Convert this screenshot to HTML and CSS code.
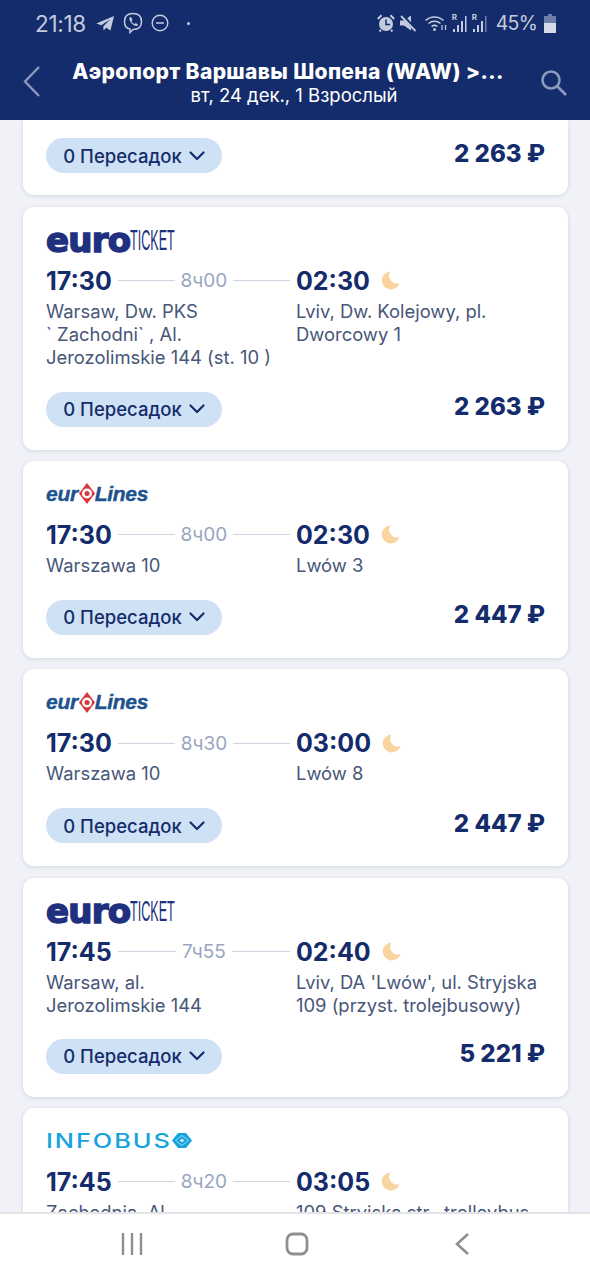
FILE: index.html
```html
<!DOCTYPE html>
<html lang="ru">
<head>
<meta charset="utf-8">
<title>Билеты</title>
<link rel="stylesheet" href="styles.css">
</head>
<body>
<svg class="defs" width="0" height="0" aria-hidden="true">
  <defs>
    <symbol id="moon" viewBox="0 0 20 20"><path d="M10 .5A9.500 9.500 0 1 0 19.500 12.500 8 8 0 0 1 10 .5Z" fill="#f9d3a0"/></symbol>
    <symbol id="chev" viewBox="0 0 16 10"><path d="M1.500 1.500 8 8l6.500-6.500" fill="none" stroke="#142c6b" stroke-width="2.200" stroke-linecap="round" stroke-linejoin="round"/></symbol>
    <symbol id="mark" viewBox="0 0 20 15"><path d="M0 7.500 6 0h8l6 7.500-6 7.500H6Z" fill="#14a3dc"/><path d="M3.500 7.500 10 2.500l6.500 5-6.500 5Z" fill="none" stroke="#bfe6f6" stroke-width=".8"/><path d="M7.500 7.500 10 5.500l2.500 2L10 9.500Z" fill="#bfe6f6"/></symbol>
    <symbol id="lmark" viewBox="0 0 16 21"><path d="M8 0 16 10.500 8 21 0 10.500Z" fill="#d8363a"/><circle cx="8" cy="10.500" r="5" fill="#fff"/><circle cx="8" cy="10.500" r="2.500" fill="#d8363a"/></symbol>
  </defs>
</svg>
<div class="app">
  <header class="top">
    <div class="status">
      <div class="status-group">
        <span class="clock">21:18</span>
        <svg class="ic" width="20" height="17" viewBox="0 0 18 16"><path d="M17.500 1 .8 8l4.700 1.600L14 4 7.500 10.500v4.200l2.800-2.800 3.800 2.600Z" fill="#c4cbde"/></svg>
        <svg class="ic" width="20" height="22" viewBox="0 0 20 22"><path d="M10 1.500c5 0 8.500 2 8.500 8s-3.500 8-8.500 8l-3 3v-3.500C3 16.500 1.500 14 1.500 9.500c0-6 3.500-8 8.500-8Z" fill="none" stroke="#c4cbde" stroke-width="1.500"/><path d="M6.500 5.500 8 5l1.500 2.500L8.500 9c.5 1.500 1.500 2.500 3 3l1.500-1 2 1.800-.8 1.200c-3.700.5-8.500-4.500-7.700-8.500Z" fill="#c4cbde"/></svg>
        <svg class="ic" width="18" height="18" viewBox="0 0 18 18"><circle cx="9" cy="9" r="7.800" fill="none" stroke="#c4cbde" stroke-width="1.400"/><path d="M5 9h8" stroke="#c4cbde" stroke-width="1.500"/></svg>
        <span class="dot"></span>
      </div>
      <div class="status-group right">
        <svg class="ic" width="18" height="18" viewBox="0 0 18 18"><circle cx="9" cy="10" r="7" fill="#c4cbde"/><path d="M9 5.500v5h4" fill="none" stroke="#142c6b" stroke-width="1.500"/><path d="M.8 5 4.500 1.300M17.200 5 13.500 1.300M4 16l-1.500 1.500M14 16l1.500 1.500" stroke="#c4cbde" stroke-width="2"/></svg>
        <svg class="ic" width="18" height="18" viewBox="0 0 18 18"><path d="M1 6.500h4l7-5v15l-7-5H1Z" fill="#c4cbde"/><path d="M3 1l14 15.500" stroke="#142c6b" stroke-width="3.500"/><path d="M2 2l14.500 15" stroke="#c4cbde" stroke-width="1.800"/></svg>
        <svg class="ic wifi" width="24" height="18" viewBox="0 0 24 18"><path d="M1.500 6.500a13 13 0 0 1 18 0M4.500 9.500a9 9 0 0 1 12 0M7.500 12.500a5 5 0 0 1 6 0" fill="none" stroke="#c4cbde" stroke-width="1.500"/><circle cx="10.500" cy="15.500" r="1.500" fill="#c4cbde"/><path d="M18 11v5M21.500 16v-5" stroke="#c4cbde" stroke-width="1.200"/></svg>
        <span class="sig"><svg width="16" height="18" viewBox="0 0 16 18"><path d="M1 15h2v3H1ZM5 11h2v7H5ZM9 7h2v11H9ZM13 2h1.500v16H13Z" fill="#c4cbde"/></svg><i class="r">R</i></span>
        <span class="sig"><svg width="16" height="18" viewBox="0 0 16 18"><path d="M1 15h2v3H1ZM5 11h2v7H5ZM9 7h2v11H9Z" fill="#c4cbde"/><path d="M13 2h1.500v16H13Z" fill="#6f7ea6"/></svg><i class="r">R</i></span>
        <span class="pct">45%</span>
        <svg class="ic" width="12" height="19" viewBox="0 0 12 19"><path d="M4 0h4v2h4v17H0V2h4Z" fill="#6f7ea6"/><path d="M0 9h12v10H0Z" fill="#d5daea"/></svg>
      </div>
    </div>
    <div class="bar">
      <svg class="back" width="20" height="32" viewBox="0 0 20 32"><path d="M17 2 3 16.500 17 31" fill="none" stroke="#8b99bd" stroke-width="2.400"/></svg>
      <div class="title">
        <div class="route">Аэропорт Варшавы Шопена (WAW) &gt;...</div>
        <div class="sub">вт, 24 дек., 1 Взрослый</div>
      </div>
      <svg class="search" width="28" height="28" viewBox="0 0 28 28"><circle cx="11" cy="11" r="8.500" fill="none" stroke="#8b99bd" stroke-width="2.600"/><path d="m17 17 9 9" stroke="#8b99bd" stroke-width="2.800"/></svg>
    </div>
  </header>

  <main class="list">
    <article class="card card-cut">
      <div class="foot">
        <button class="pill">0 Пересадок <svg class="chev"><use href="#chev"/></svg></button>
        <div class="price">2 263 ₽</div>
      </div>
    </article>

    <article class="card">
      <div class="logo euro"><span class="euro-a">euro</span><span class="euro-b">TICKET</span></div>
      <div class="times">
        <div class="col dep"><b class="time">17:30</b><span class="line"></span><span class="dur">8ч00</span><span class="line"></span></div>
        <div class="col"><b class="time">02:30</b><svg class="moon"><use href="#moon"/></svg></div>
      </div>
      <div class="places">
        <div class="place">Warsaw, Dw. PKS<br>` Zachodni` , Al.<br>Jerozolimskie 144 (st. 10 )</div>
        <div class="place">Lviv, Dw. Kolejowy, pl.<br>Dworcowy 1</div>
      </div>
      <div class="foot">
        <button class="pill">0 Пересадок <svg class="chev"><use href="#chev"/></svg></button>
        <div class="price">2 263 ₽</div>
      </div>
    </article>

    <article class="card">
      <div class="logo lines"><span>eur</span><svg class="lines-mark"><use href="#lmark"/></svg><span>Lines</span></div>
      <div class="times">
        <div class="col dep"><b class="time">17:30</b><span class="line"></span><span class="dur">8ч00</span><span class="line"></span></div>
        <div class="col"><b class="time">02:30</b><svg class="moon"><use href="#moon"/></svg></div>
      </div>
      <div class="places">
        <div class="place">Warszawa 10</div>
        <div class="place">Lwów 3</div>
      </div>
      <div class="foot">
        <button class="pill">0 Пересадок <svg class="chev"><use href="#chev"/></svg></button>
        <div class="price">2 447 ₽</div>
      </div>
    </article>

    <article class="card">
      <div class="logo lines"><span>eur</span><svg class="lines-mark"><use href="#lmark"/></svg><span>Lines</span></div>
      <div class="times">
        <div class="col dep"><b class="time">17:30</b><span class="line"></span><span class="dur">8ч30</span><span class="line"></span></div>
        <div class="col"><b class="time">03:00</b><svg class="moon"><use href="#moon"/></svg></div>
      </div>
      <div class="places">
        <div class="place">Warszawa 10</div>
        <div class="place">Lwów 8</div>
      </div>
      <div class="foot">
        <button class="pill">0 Пересадок <svg class="chev"><use href="#chev"/></svg></button>
        <div class="price">2 447 ₽</div>
      </div>
    </article>

    <article class="card">
      <div class="logo euro"><span class="euro-a">euro</span><span class="euro-b">TICKET</span></div>
      <div class="times">
        <div class="col dep"><b class="time">17:45</b><span class="line"></span><span class="dur">7ч55</span><span class="line"></span></div>
        <div class="col"><b class="time">02:40</b><svg class="moon"><use href="#moon"/></svg></div>
      </div>
      <div class="places">
        <div class="place">Warsaw, al.<br>Jerozolimskie 144</div>
        <div class="place">Lviv, DA 'Lwów', ul. Stryjska<br>109 (przyst. trolejbusowy)</div>
      </div>
      <div class="foot foot-short">
        <button class="pill">0 Пересадок <svg class="chev"><use href="#chev"/></svg></button>
        <div class="price">5 221 ₽</div>
      </div>
    </article>

    <article class="card">
      <div class="logo info"><span class="info-text">INFOBUS</span><svg class="info-mark"><use href="#mark"/></svg></div>
      <div class="times">
        <div class="col dep"><b class="time">17:45</b><span class="line"></span><span class="dur">8ч20</span><span class="line"></span></div>
        <div class="col"><b class="time">03:05</b><svg class="moon"><use href="#moon"/></svg></div>
      </div>
      <div class="places">
        <div class="place">Zachodnia, Al.</div>
        <div class="place">109 Stryjska str., trolleybus</div>
      </div>
    </article>
  </main>

  <nav class="nav">
    <svg width="24" height="24" viewBox="0 0 24 24"><path d="M3 1v22M12 1v22M21 1v22" stroke="#8f8f8f" stroke-width="2.400"/></svg>
    <svg width="24" height="24" viewBox="0 0 24 24"><rect x="2" y="2" width="20" height="20" rx="6" fill="none" stroke="#8f8f8f" stroke-width="2.800"/></svg>
    <svg width="16" height="24" viewBox="0 0 16 24"><path d="M14 2 3 12l11 10" fill="none" stroke="#8f8f8f" stroke-width="2.600"/></svg>
  </nav>
</div>
</body>
</html>
```

FILE: styles.css
```css
* { box-sizing: border-box; }
html, body { margin: 0; padding: 0; }
body { font-family: Inter, "Noto Sans", sans-serif; background: #f0f2f7; color: #142c6b; }
.defs { position: absolute; }
.app { width: 590px; height: 1280px; display: flex; flex-direction: column; overflow: hidden; }

.top { height: 120px; flex: none; background: #142c6b; }
.status { height: 46px; padding: 0 34px 0 35px; display: flex; justify-content: space-between; align-items: center; color: #c4cbde; }
.status-group { display: flex; align-items: center; gap: 8px; }
.status-group.right { gap: 4px; }
.clock { font-size: 22.500px; font-weight: 400; letter-spacing: -.3px; margin-right: 1px; }
.ic { display: block; flex: none; }
.dot { width: 3px; height: 3px; border-radius: 50%; background: #c4cbde; margin-left: 10px; }
.wifi { margin-left: 3px; }
.sig { position: relative; display: block; height: 18px; }
.sig svg { display: block; }
.r { position: absolute; left: 0; top: -2px; font-size: 8px; font-style: normal; font-weight: 700; }
.pct { font-size: 19.500px; letter-spacing: -.8px; margin: 0 3px 0 4px; }

.bar { height: 74px; display: flex; align-items: center; padding: 0 22px; }
.back { flex: none; margin-bottom: 4px; }
.title { flex: 1; text-align: center; color: #fff; padding-right: 6px; }
.route { font-size: 21px; font-weight: 800; letter-spacing: .35px; line-height: 25px; white-space: nowrap; }
.sub { font-size: 18.500px; line-height: 23px; padding-left: 12px; }
.search { flex: none; }

.list { flex: 1; min-height: 0; overflow: hidden; padding: 0 22px 0 23px; display: flex; flex-direction: column; gap: 11.300px; }
.card { flex: none; background: #fff; border-radius: 11px; padding: 22px 23px 23px; box-shadow: 0 1px 4px rgba(20, 44, 107, .14); }
.card-cut { padding-top: 18px; border-radius: 0 0 11px 11px; height: 75.400px; }

.logo { height: 22px; display: flex; align-items: center; }
.euro { color: #20307f; }
.euro-a { font-family: "DejaVu Sans", sans-serif; font-weight: 700; font-size: 34px; letter-spacing: -.8px; line-height: 22px; -webkit-text-stroke: 1.500px #20307f; }
.euro-b { font-family: "Liberation Sans", sans-serif; font-size: 30px; line-height: 22px; transform: scaleX(.42); transform-origin: left center; }
.lines { color: #20528f; font-family: "Liberation Sans", sans-serif; font-style: italic; font-weight: 700; font-size: 21px; letter-spacing: -.3px; -webkit-text-stroke: .4px #20528f; }
.lines-mark { width: 16px; height: 21px; margin: 0 0 0 1px; flex: none; }
.info { color: #14a3dc; font-size: 19.500px; font-weight: 500; letter-spacing: 1.500px; }
.info-text { display: inline-block; width: 126px; transform: scaleX(1.3); transform-origin: left center; }
.info-mark { width: 20px; height: 15px; flex: none; }

.times { display: grid; grid-template-columns: 250px 1fr; margin-top: 15px; height: 30px; align-items: center; }
.col { display: flex; align-items: center; }
.time { font-size: 25px; font-weight: 700; line-height: 30px; color: #142c6b; }
.line { flex: 1; height: 1px; background: #cdd3e1; margin: 0 6px; }
.dur { font-size: 19px; color: #9aa5bf; }
.moon { width: 19px; height: 19px; margin-left: 11px; }

.places { display: grid; grid-template-columns: 250px 1fr; margin-top: 4px; font-size: 18.400px; line-height: 23px; color: #475679; }
.place { white-space: nowrap; }

.foot { display: flex; justify-content: space-between; align-items: center; margin-top: 23px; }
.card-cut .foot { margin-top: 0; }
.foot-short { margin-top: 22px; }
.pill { border: 0; height: 35px; width: 176px; border-radius: 18px; background: #cfe2f5; color: #142c6b; font: 500 18.500px Inter, sans-serif; display: flex; align-items: center; justify-content: center; gap: 7px; padding: 0; }
.chev { width: 16px; height: 10px; }
.price { font-size: 24px; font-weight: 800; color: #142c6b; padding-bottom: 5px; }

.nav { height: 68px; flex: none; background: #fff; border-top: 2px solid #e4e4e6; display: grid; grid-template-columns: repeat(3, 1fr); justify-items: center; align-items: center; padding: 0 45.500px 6px 49.500px; }
```
